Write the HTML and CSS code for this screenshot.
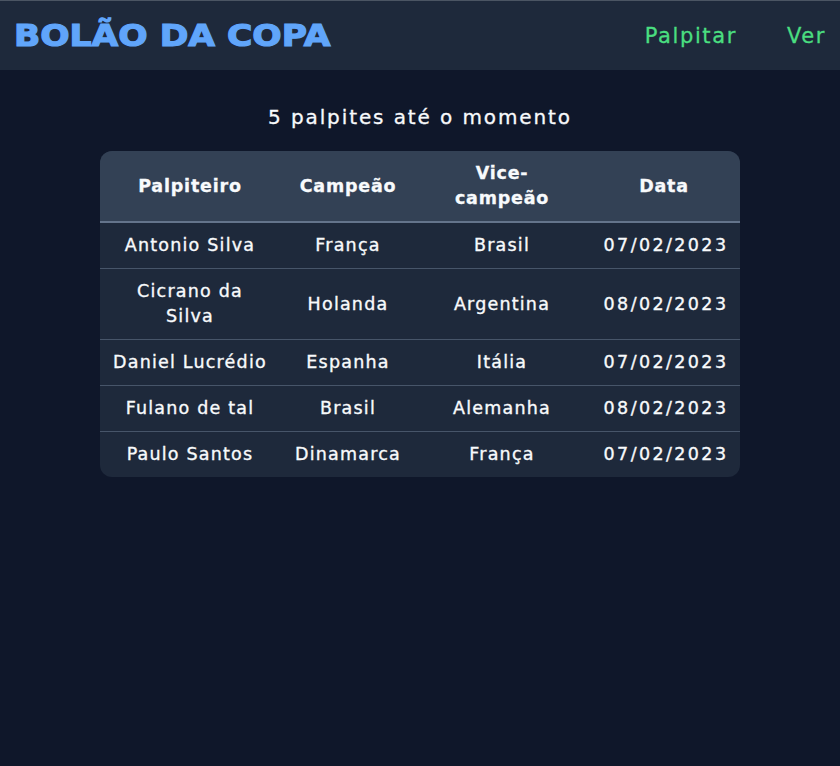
FILE: index.html
```html
<!DOCTYPE html>
<html lang="pt-BR">
<head>
<meta charset="utf-8">
<title>Bolão da Copa</title>
<link rel="stylesheet" href="styles.css">
</head>
<body>
<header class="topbar">
  <h1 class="brand">BOLÃO DA COPA</h1>
  <nav class="nav">
    <a class="nav-link" href="#">Palpitar</a>
    <a class="nav-link" href="#">Ver</a>
  </nav>
</header>
<main class="content">
  <h2 class="count">5 palpites até o momento</h2>
  <div class="table-wrap">
    <table class="guesses">
      <colgroup>
        <col class="c1"><col class="c2"><col class="c3"><col class="c4">
      </colgroup>
      <thead>
        <tr><th>Palpiteiro</th><th>Campeão</th><th>Vice-<br>campeão</th><th>Data</th></tr>
      </thead>
      <tbody>
        <tr><td>Antonio Silva</td><td>França</td><td>Brasil</td><td class="date">07/02/2023</td></tr>
        <tr><td>Cicrano da<br>Silva</td><td>Holanda</td><td>Argentina</td><td class="date">08/02/2023</td></tr>
        <tr><td>Daniel Lucrédio</td><td>Espanha</td><td>Itália</td><td class="date">07/02/2023</td></tr>
        <tr><td>Fulano de tal</td><td>Brasil</td><td>Alemanha</td><td class="date">08/02/2023</td></tr>
        <tr><td>Paulo Santos</td><td>Dinamarca</td><td>França</td><td class="date">07/02/2023</td></tr>
      </tbody>
    </table>
  </div>
</main>
</body>
</html>
```
FILE: styles.css
```css
html, body {
  margin: 0;
  padding: 0;
  background: #0f172a;
  color: #f8fafc;
  font-family: "DejaVu Sans", "Noto Sans", sans-serif;
}
body {
  min-height: 766px;
}
.topbar {
  display: flex;
  align-items: center;
  justify-content: space-between;
  height: 69px;
  background: #1e293b;
  border-top: 1px solid #4b5563;
  padding: 0 14px 0 14px;
}
.brand {
  margin: 0;
  font-size: 30px;
  font-weight: 900;
  letter-spacing: 0;
  color: #60a5fa;
  line-height: 1;
  -webkit-text-stroke: 1.2px #60a5fa;
  transform: scaleX(1.15);
  transform-origin: left center;
}
.nav {
  display: flex;
  gap: 50px;
}
.nav-link {
  color: #4ade80;
  text-decoration: none;
  font-size: 21px;
  letter-spacing: 1.6px;
  -webkit-text-stroke: 0.3px #4ade80;
}
.content {
  display: flex;
  flex-direction: column;
  align-items: center;
}
.count {
  margin: 33px 0 20px;
  font-size: 20px;
  font-weight: 400;
  line-height: 28px;
  letter-spacing: 1.9px;
  -webkit-text-stroke: 0.3px #f8fafc;
}
.table-wrap {
  width: 640px;
  border-radius: 12px;
  overflow: hidden;
  background: #1e293b;
}
.guesses {
  width: 100%;
  border-collapse: collapse;
  table-layout: fixed;
  font-size: 17.5px;
  line-height: 25px;
  letter-spacing: 1.2px;
}
.c1 { width: 180px; }
.c2 { width: 136px; }
.c3 { width: 172px; }
.c4 { width: 152px; }
.guesses th {
  background: #334155;
  font-weight: 700;
  padding: 10px 2px;
  border-bottom: 2px solid #64748b;
  letter-spacing: 0.8px;
  -webkit-text-stroke: 0.3px #f8fafc;
}
.guesses td {
  text-align: center;
  padding: 10px 0;
  border-top: 1px solid #475569;
  -webkit-text-stroke: 0.35px #f8fafc;
}
.guesses td.date {
  letter-spacing: 2.4px;
  padding-left: 4px;
}
.guesses tbody tr:first-child td {
  border-top: none;
}
```
